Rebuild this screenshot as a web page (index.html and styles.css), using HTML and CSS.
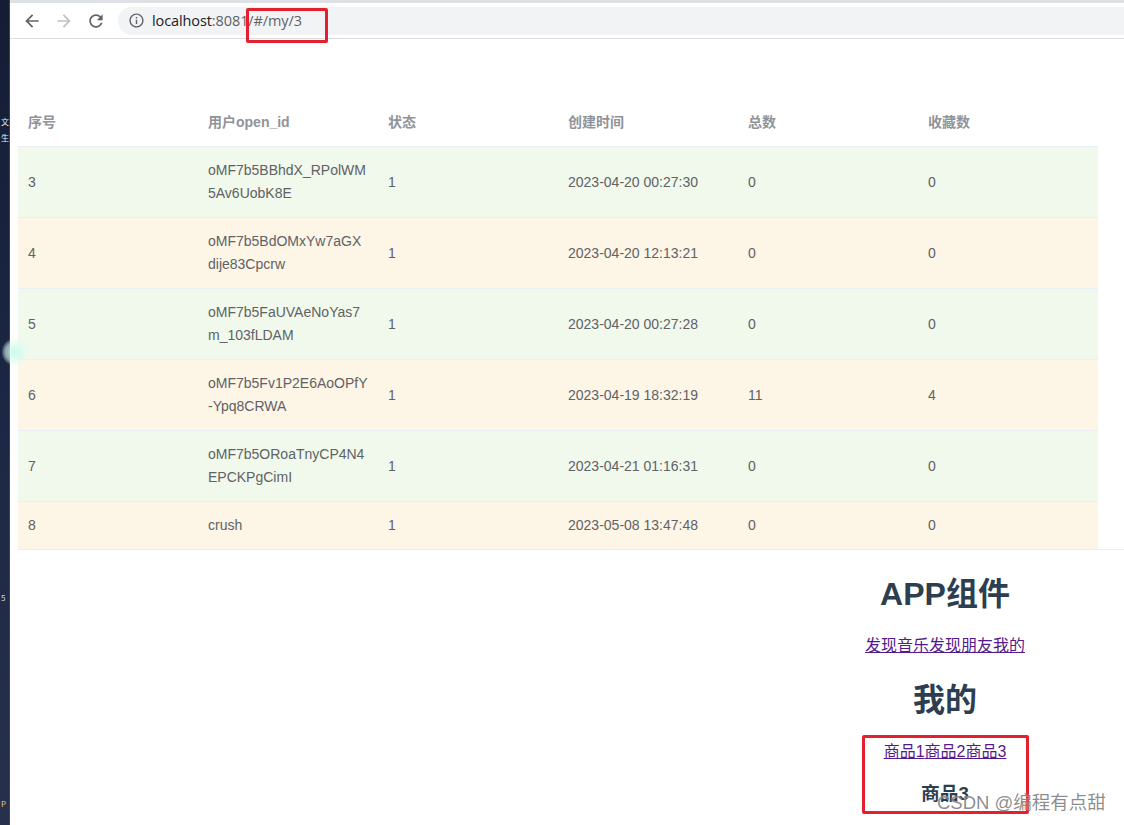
FILE: index.html
```html
<!DOCTYPE html>
<html lang="zh-CN">
<head>
<meta charset="utf-8">
<title>my/3</title>
<link rel="stylesheet" href="styles.css">
</head>
<body>
<div class="screen">
  <div class="desktop">
    <span class="frag f1">文</span>
    <span class="frag f2">生</span>
    <span class="frag f3">5</span>
    <span class="frag f4">P</span>
  </div>
  <div class="browser">
    <div class="tabstrip"><div class="tab-active"></div></div>
    <div class="toolbar">
      <span class="navbtn">
        <svg viewBox="0 0 24 24" width="20" height="20"><path fill="#5f6368" d="M20 11H7.83l5.59-5.59L12 4l-8 8 8 8 1.41-1.41L7.830 13H20v-2z"/></svg>
      </span>
      <span class="navbtn">
        <svg viewBox="0 0 24 24" width="20" height="20"><path fill="#bdc1c6" d="M12 4l-1.41 1.41L16.17 11H4v2h12.17l-5.58 5.59L12 20l8-8z"/></svg>
      </span>
      <span class="navbtn">
        <svg viewBox="0 0 24 24" width="20" height="20"><path fill="#5f6368" d="M17.650 6.35C16.2 4.9 14.21 4 12 4c-4.42 0-7.99 3.58-7.99 8s3.57 8 7.99 8c3.73 0 6.84-2.55 7.73-6h-2.08c-.82 2.33-3.04 4-5.65 4-3.31 0-6-2.69-6-6s2.69-6 6-6c1.66 0 3.14.69 4.22 1.78L13 11h7V4l-2.35 2.35z"/></svg>
      </span>
      <div class="omnibox">
        <svg class="info" viewBox="0 0 24 24" width="17" height="17"><path fill="#5f6368" d="M11 7h2v2h-2zm0 4h2v6h-2zm1-9C6.48 2 2 6.48 2 12s4.48 10 10 10 10-4.48 10-10S17.52 2 12 2zm0 18c-4.41 0-8-3.59-8-8s3.59-8 8-8 8 3.59 8 8-3.59 8-8 8z"/></svg>
        <span class="url"><span class="host">localhost</span><span class="path">:8081/#/my/3</span></span>
      </div>
    </div>
    <div class="page">
      <div class="table-wrap">
        <table class="data">
          <colgroup><col><col><col><col><col><col></colgroup>
          <thead>
            <tr><th><div class="cell">序号</div></th><th><div class="cell">用户open_id</div></th><th><div class="cell">状态</div></th><th><div class="cell">创建时间</div></th><th><div class="cell">总数</div></th><th><div class="cell">收藏数</div></th></tr>
          </thead>
          <tbody>
            <tr class="success"><td><div class="cell">3</div></td><td><div class="cell">oMF7b5BBhdX_RPolWM5Av6UobK8E</div></td><td><div class="cell">1</div></td><td><div class="cell">2023-04-20 00:27:30</div></td><td><div class="cell">0</div></td><td><div class="cell">0</div></td></tr>
            <tr class="warning"><td><div class="cell">4</div></td><td><div class="cell">oMF7b5BdOMxYw7aGXdije83Cpcrw</div></td><td><div class="cell">1</div></td><td><div class="cell">2023-04-20 12:13:21</div></td><td><div class="cell">0</div></td><td><div class="cell">0</div></td></tr>
            <tr class="success"><td><div class="cell">5</div></td><td><div class="cell">oMF7b5FaUVAeNoYas7m_103fLDAM</div></td><td><div class="cell">1</div></td><td><div class="cell">2023-04-20 00:27:28</div></td><td><div class="cell">0</div></td><td><div class="cell">0</div></td></tr>
            <tr class="warning"><td><div class="cell">6</div></td><td><div class="cell">oMF7b5Fv1P2E6AoOPfY-Ypq8CRWA</div></td><td><div class="cell">1</div></td><td><div class="cell">2023-04-19 18:32:19</div></td><td><div class="cell">11</div></td><td><div class="cell">4</div></td></tr>
            <tr class="success"><td><div class="cell">7</div></td><td><div class="cell">oMF7b5ORoaTnyCP4N4EPCKPgCimI</div></td><td><div class="cell">1</div></td><td><div class="cell">2023-04-21 01:16:31</div></td><td><div class="cell">0</div></td><td><div class="cell">0</div></td></tr>
            <tr class="warning last"><td><div class="cell">8</div></td><td><div class="cell">crush</div></td><td><div class="cell">1</div></td><td><div class="cell">2023-05-08 13:47:48</div></td><td><div class="cell">0</div></td><td><div class="cell">0</div></td></tr>
          </tbody>
        </table>
      </div>
      <div class="app-row">
        <div class="app">
          <h1 class="title t1">APP组件</h1>
          <div class="links l1"><a href="#/discover">发现音乐</a><a href="#/friend">发现朋友</a><a href="#/my">我的</a></div>
          <h1 class="title t2">我的</h1>
          <div class="links l2"><a href="#/my/1">商品1</a><a href="#/my/2">商品2</a><a href="#/my/3">商品3</a></div>
          <h3 class="item">商品3</h3>
        </div>
      </div>
    </div>
  </div>
  <div class="glow"></div>
  <div class="mark mark-url"></div>
  <div class="mark mark-bottom"></div>
  <div class="watermark">CSDN @编程有点甜</div>
</div>
</body>
</html>
```

FILE: styles.css
```css
* { box-sizing: border-box; }
html, body { margin: 0; padding: 0; }
body {
  width: 1124px;
  height: 825px;
  overflow: hidden;
  background: #fff;
  font-family: "Liberation Sans", Arial, "Noto Sans CJK SC", sans-serif;
}
.screen {
  position: relative;
  display: flex;
  width: 1124px;
  height: 825px;
  overflow: hidden;
}
.desktop {
  position: relative;
  width: 10px;
  flex: 0 0 10px;
  height: 825px;
  overflow: hidden;
  background: linear-gradient(180deg, #141d33 0%, #1b2644 45%, #27314d 100%);
  border-right: 1px solid #39425a;
}
.frag {
  position: absolute;
  left: 1px;
  color: #e9ecf2;
  font-family: "Noto Sans CJK SC", "Liberation Sans", sans-serif;
  font-size: 8px;
  line-height: 9px;
}
.f1 { top: 117px; }
.f2 { top: 133px; }
.f3 { top: 593px; color: #cfd6e6; }
.f4 { top: 799px; color: #e6c98a; }

.browser {
  flex: 1;
  display: flex;
  flex-direction: column;
  min-width: 0;
}
.tabstrip {
  height: 3px;
  background: #dee1e6;
  display: flex;
}
.tab-active {
  width: 0;
}
.toolbar {
  height: 36px;
  display: flex;
  align-items: center;
  background: #fff;
  border-bottom: 1px solid #dadce0;
  padding-left: 6px;
}
.navbtn {
  width: 32px;
  height: 28px;
  display: flex;
  align-items: center;
  justify-content: center;
}
.omnibox {
  flex: 1;
  height: 28px;
  margin-left: 6px;
  border-radius: 14px 0 0 14px;
  background: #f1f3f4;
  display: flex;
  align-items: center;
  padding-left: 10px;
}
.info { flex: 0 0 auto; }
.url {
  margin-left: 7px;
  font-family: "Open Sans", "Liberation Sans", sans-serif;
  font-size: 14.5px;
  letter-spacing: -0.1px;
}
.host { color: #202124; }
.path { color: #5f6368; }

.page {
  flex: 1;
  padding-left: 8px;
  padding-top: 60px;
}
.table-wrap {
  border-bottom: 1px solid #ebeef5;
  font-family: "Liberation Sans", Arial, "Noto Sans CJK SC", sans-serif;
  font-size: 14px;
}
.data {
  width: 1080px;
  table-layout: fixed;
  border-collapse: collapse;
  border-spacing: 0;
}
.data col { width: 180px; }
.data th, .data td {
  padding: 12px 0;
  text-align: left;
  vertical-align: middle;
  border-bottom: 1px solid #ebeef5;
}
.data .last td { border-bottom: 0; }
.data th {
  color: #909399;
  font-weight: bold;
  background: #fff;
}
.data td { color: #606266; }
.cell {
  padding: 0 10px;
  line-height: 23px;
  word-break: break-all;
  white-space: normal;
}
.success { background: #f0f9eb; }
.warning { background: #fdf5e6; }

.app-row {
  display: flex;
  justify-content: flex-end;
}
.app {
  width: 358px;
  display: flex;
  flex-direction: column;
  align-items: center;
  text-align: center;
  color: #2c3e50;
  font-family: "Liberation Sans", Arial, "Noto Sans CJK SC", sans-serif;
}
.title {
  margin: 0;
  font-size: 32px;
  line-height: 40px;
  font-weight: bold;
}
.t1 { margin-top: 24px; }
.t2 { margin-top: 24px; }
.links {
  font-size: 16px;
  line-height: 20px;
  margin-top: 22px;
}
.links a { color: #551a8b; text-decoration: underline; }
.item {
  margin: 20px 0 0;
  font-size: 18.7px;
  line-height: 24px;
  font-weight: bold;
}

.glow {
  position: absolute;
  left: 2px;
  top: 338px;
  width: 26px;
  height: 28px;
  border-radius: 50%;
  background: radial-gradient(circle at 50% 50%, rgba(200, 250, 232, 0.95) 0%, rgba(220, 252, 242, 0.6) 50%, rgba(255,255,255,0) 75%);
}
.mark {
  position: absolute;
  border: 3px solid #e5202e;
  border-radius: 2px;
}
.mark-url {
  left: 246px;
  top: 8px;
  width: 82px;
  height: 35px;
}
.mark-bottom {
  left: 862px;
  top: 735px;
  width: 167px;
  height: 79px;
}
.watermark {
  position: absolute;
  left: 937px;
  top: 792px;
  font-family: "Liberation Sans", "Noto Sans CJK SC", sans-serif;
  font-size: 18.5px;
  line-height: 22px;
  color: rgba(95, 95, 95, 0.72);
  white-space: nowrap;
  text-shadow: 0 0 1px rgba(255,255,255,0.8);
}
```
